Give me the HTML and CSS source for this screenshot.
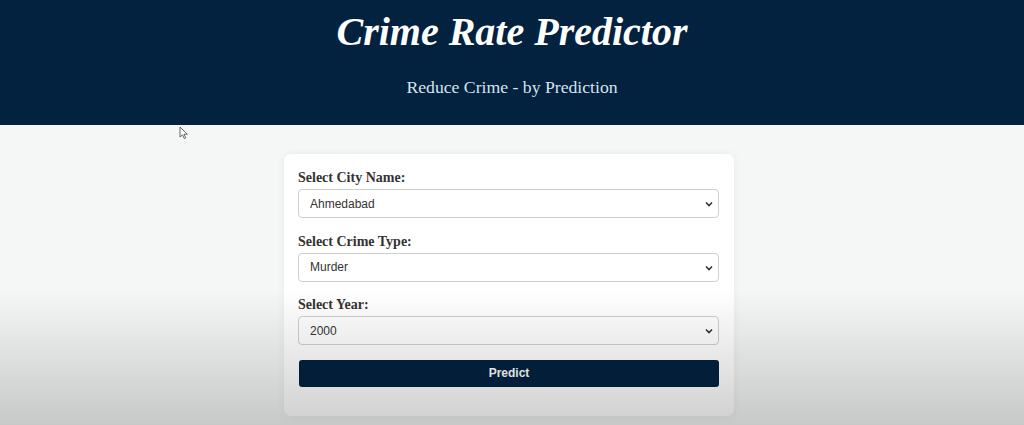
FILE: index.html
```html
<!DOCTYPE html>
<html lang="en">
<head>
<meta charset="utf-8">
<title>Crime Rate Predictor</title>
<link rel="stylesheet" href="styles.css">
</head>
<body>
<header class="hero">
  <h1 class="hero-title">Crime Rate Predictor</h1>
  <p class="hero-sub">Reduce Crime - by Prediction</p>
</header>
<main class="main">
  <form class="card">
    <div class="field">
      <label class="field-label" for="city">Select City Name:</label>
      <div class="select-wrap">
        <select class="field-select" id="city">
          <option>Ahmedabad</option>
        </select>
        <svg class="chev" width="8" height="6" viewBox="0 0 8 6"><path d="M1 1.5 L4 4.5 L7 1.5" fill="none" stroke="#333" stroke-width="1.6"/></svg>
      </div>
    </div>
    <div class="field">
      <label class="field-label" for="crime">Select Crime Type:</label>
      <div class="select-wrap">
        <select class="field-select" id="crime">
          <option>Murder</option>
        </select>
        <svg class="chev" width="8" height="6" viewBox="0 0 8 6"><path d="M1 1.5 L4 4.5 L7 1.5" fill="none" stroke="#333" stroke-width="1.6"/></svg>
      </div>
    </div>
    <div class="field">
      <label class="field-label" for="year">Select Year:</label>
      <div class="select-wrap">
        <select class="field-select" id="year">
          <option>2000</option>
        </select>
        <svg class="chev" width="8" height="6" viewBox="0 0 8 6"><path d="M1 1.5 L4 4.5 L7 1.5" fill="none" stroke="#333" stroke-width="1.6"/></svg>
      </div>
    </div>
    <button class="predict-btn" type="button">Predict</button>
  </form>
</main>
<div class="shade"></div>
<svg class="cursor" width="10" height="14" viewBox="0 0 10 14"><path d="M1 1 L1 11 L3.5 8.8 L5.3 12.6 L6.8 11.9 L5 8.2 L8.3 8.2 Z" fill="#fff" stroke="#555" stroke-width="0.9" stroke-linejoin="round"/></svg>
</body>
</html>
```
FILE: styles.css
```css
* { box-sizing: border-box; }
html, body { margin: 0; padding: 0; }
body {
  background: #f5f7f7;
  font-family: "Liberation Serif", "Times New Roman", serif;
  height: 425px;
  overflow: hidden;
  position: relative;
}
.hero {
  background: #022240;
  height: 125px;
  text-align: center;
  padding-top: 8px;
}
.hero-title {
  margin: 0;
  color: #fff;
  font-style: italic;
  font-weight: 700;
  font-size: 40px;
  line-height: 48px;
}
.hero-sub {
  margin: 20px 0 0;
  color: #d7e4ee;
  font-size: 17.7px;
  line-height: 22px;
}
.main {
  display: flex;
  justify-content: center;
  padding-top: 29px;
  padding-right: 6px;
}
.card {
  width: 450px;
  background: #fff;
  border-radius: 7px;
  box-shadow: 0 0 8px rgba(0,0,0,0.06);
  padding: 15px 15px 29px 14px;
}
.field { margin-bottom: 14.5px; }
.field-label {
  display: block;
  font-weight: 700;
  font-size: 14px;
  line-height: 18px;
  color: #333;
  margin-bottom: 2px;
}
.select-wrap {
  position: relative;
  width: 421px;
}
.field-select {
  display: block;
  width: 421px;
  height: 29px;
  border: 1px solid #cfcfcf;
  border-radius: 4px;
  background: #fff;
  padding: 0 11px;
  appearance: none;
  -webkit-appearance: none;
  font-family: "Liberation Sans", Arial, sans-serif;
  font-size: 12px;
  color: #333;
}
.chev {
  position: absolute;
  right: 6px;
  top: 12px;
  pointer-events: none;
}
.predict-btn {
  display: block;
  width: 420px;
  height: 27px;
  margin: 1.5px 0 0 1px;
  background: #022240;
  color: #fff;
  border: none;
  border-radius: 3px;
  font-family: "Liberation Sans", Arial, sans-serif;
  font-weight: 700;
  font-size: 12px;
}
.shade {
  position: absolute;
  left: 0; right: 0; top: 290px; bottom: 0;
  background: linear-gradient(to bottom, rgba(0,0,0,0), rgba(0,0,0,0.19));
  pointer-events: none;
}
.cursor {
  position: absolute;
  left: 179px;
  top: 126px;
}
```
